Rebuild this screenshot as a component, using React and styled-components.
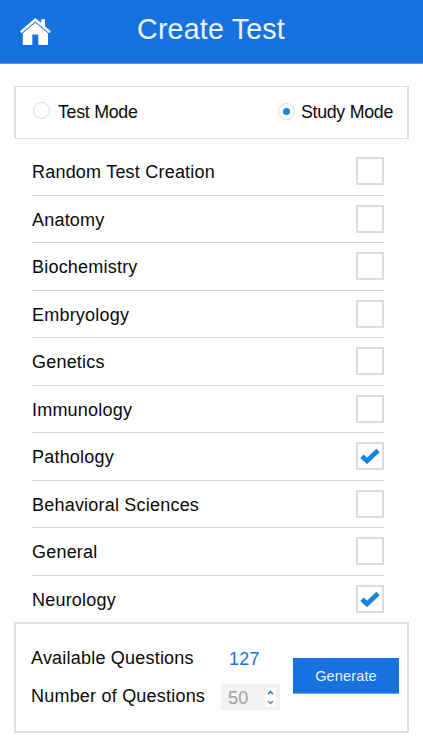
import React, { useState } from 'react'
import styled, { createGlobalStyle } from 'styled-components'

const GlobalStyle = createGlobalStyle`
  * {
    box-sizing: border-box;
  }

  body {
    margin: 0;
    background: #fff;
    color: #0a0a0a;
    font-family: 'Liberation Sans', Arial, sans-serif;
    font-size: 18px;
    line-height: 22px;
  }

  button {
    font-family: inherit;
    border: 0;
    padding: 0;
  }
`

const Screen = styled.div`
  width: 423px;
  height: 750px;
  overflow: hidden;
`

const Header = styled.header`
  display: grid;
  grid-template-columns: 70px 1fr 71px;
  align-items: center;
  height: 64px;
  padding-bottom: 5px;
  background: #1772e0;
  border-bottom: 1px solid #4d97ec;
`

const HomeButton = styled.button`
  display: flex;
  margin: 5px 0 0 20px;
  background: none;
`

const Title = styled.h1`
  margin: 0;
  text-align: center;
  color: #e8f4ff;
  font-size: 28.6px;
  font-weight: 400;
  line-height: 34px;
  letter-spacing: 0.2px;
`

const ModePanel = styled.div`
  display: flex;
  justify-content: space-between;
  margin: 22px 14px 0;
  height: 53px;
  padding: 0 14px 0 17px;
  border: solid #dedede;
  border-width: 1px 2px;
`

const Mode = styled.label`
  display: flex;
  align-items: center;
  gap: ${props => props.$gap}px;
  padding-bottom: 1px;
  font-size: 17.8px;
  letter-spacing: -0.28px;
`

const Radio = styled.span`
  display: flex;
  align-items: center;
  justify-content: center;
  width: 17px;
  height: 17px;
  margin-bottom: ${props => props.$lift}px;
  border: 1px solid #d8d8d8;
  border-radius: 50%;

  &::after {
    content: '';
    width: 7px;
    height: 7px;
    border-radius: 50%;
    background: ${props => (props.$on ? '#1a86e4' : 'transparent')};
  }
`

const Text = styled.span`
  white-space: nowrap;
`

const Topics = styled.ul`
  list-style: none;
  margin: 9px 39px 0 32px;
  padding: 0;
  height: 474px;
`

const Topic = styled.li`
  display: flex;
  align-items: center;
  justify-content: space-between;
  height: 47.5px;
  border-bottom: 1px solid #d9d9d9;
  cursor: pointer;

  &:last-child {
    border-bottom-color: transparent;
  }
`

const TopicName = styled(Text)`
  padding-top: 2px;
  letter-spacing: 0.21px;
`

const Box = styled.span`
  display: flex;
  align-items: center;
  justify-content: center;
  width: 28px;
  height: 28px;
  border: 2px solid #dcdcdc;
`

const SummaryPanel = styled.section`
  display: flex;
  justify-content: space-between;
  margin: 0 14px;
  height: 111px;
  padding: 0 8px 0 15px;
  border: 2px solid #dedede;
`

const Figures = styled.div`
  display: grid;
  grid-template-columns: 190px 59px;
  grid-template-rows: 38px 38px;
  align-items: center;
  padding-top: 15px;
`

const FigureName = styled(Text)`
  letter-spacing: 0.21px;
`

const Available = styled.span`
  padding: 2px 0 0 8px;
  color: #1772d8;
  letter-spacing: 0.2px;
`

const Stepper = styled.div`
  display: flex;
  align-items: center;
  justify-content: space-between;
  height: 26px;
  margin-top: 2px;
  padding: 0 4px 0 7px;
  background: #f2f2f2;
  color: #a0a0a0;
`

const Count = styled.span`
  padding-top: 1px;
  letter-spacing: 0.2px;
`

const Arrows = styled.div`
  display: flex;
  flex-direction: column;
  gap: 1px;
`

const Arrow = styled.button`
  display: flex;
  align-items: center;
  justify-content: center;
  width: 11px;
  height: 9px;
  background: #fff;
  color: ${props => props.color};
`

const Generate = styled.button`
  width: 106px;
  height: 36px;
  margin-top: 34px;
  background: #1772e0;
  border-bottom: 1px solid #65a8ef;
  color: #e8f4ff;
  font-size: 14.5px;
  letter-spacing: 0.15px;
`

const HomeIcon = () => (
  <svg width="31" height="28" viewBox="0 0 31 28" fill="#fff">
    <path d="M15.3 0 L21.2 5 V1.2 H25 V8.3 L30.8 13.2 L29.3 15.2 L15.3 3.6 L1.4 15.2 L0 13.2 Z" />
    <path d="M15.3 4.7 L28 15.3 V27 H18.3 V16.6 H12.3 V27 H2.8 V15.3 Z" />
  </svg>
)

const CheckIcon = () => (
  <svg width="20" height="16" viewBox="0 0 20 16" fill="none">
    <path d="M2 8.3 L7 12.9 L18 2.5" stroke="#1a82e0" strokeWidth="4.8" />
  </svg>
)

const Chevron = ({ up }) => (
  <svg width="7" height="5" viewBox="0 0 7 5" fill="none">
    <path
      d={up ? 'M1 4 L3.5 1.6 L6 4' : 'M1 1 L3.5 3.4 L6 1'}
      stroke="currentColor"
      strokeWidth="1.6"
    />
  </svg>
)

const topics = [
  'Random Test Creation',
  'Anatomy',
  'Biochemistry',
  'Embryology',
  'Genetics',
  'Immunology',
  'Pathology',
  'Behavioral Sciences',
  'General',
  'Neurology'
]

const App = () => {
  const [mode, setMode] = useState('study')
  const [count, setCount] = useState(50)
  const [selected, setSelected] = useState(['Pathology', 'Neurology'])

  const toggle = name =>
    setSelected(
      selected.includes(name)
        ? selected.filter(item => item !== name)
        : [...selected, name]
    )

  return (
    <Screen>
      <GlobalStyle />
      <Header>
        <HomeButton aria-label="Home">
          <HomeIcon />
        </HomeButton>
        <Title>Create Test</Title>
      </Header>
      <ModePanel>
        <Mode $gap={8} onClick={() => setMode('test')}>
          <Radio $on={mode === 'test'} $lift={4} />
          <Text>Test Mode</Text>
        </Mode>
        <Mode $gap={6} onClick={() => setMode('study')}>
          <Radio $on={mode === 'study'} $lift={2} />
          <Text>Study Mode</Text>
        </Mode>
      </ModePanel>
      <Topics>
        {topics.map(name => (
          <Topic key={name} onClick={() => toggle(name)}>
            <TopicName>{name}</TopicName>
            <Box>{selected.includes(name) && <CheckIcon />}</Box>
          </Topic>
        ))}
      </Topics>
      <SummaryPanel>
        <Figures>
          <FigureName>Available Questions</FigureName>
          <Available>127</Available>
          <FigureName>Number of Questions</FigureName>
          <Stepper>
            <Count>{count}</Count>
            <Arrows>
              <Arrow
                color="#1a86e4"
                aria-label="More"
                onClick={() => setCount(count + 1)}
              >
                <Chevron up />
              </Arrow>
              <Arrow
                color="#8c8c8c"
                aria-label="Fewer"
                onClick={() => setCount(count - 1)}
              >
                <Chevron />
              </Arrow>
            </Arrows>
          </Stepper>
        </Figures>
        <Generate>Generate</Generate>
      </SummaryPanel>
    </Screen>
  )
}

export default App
